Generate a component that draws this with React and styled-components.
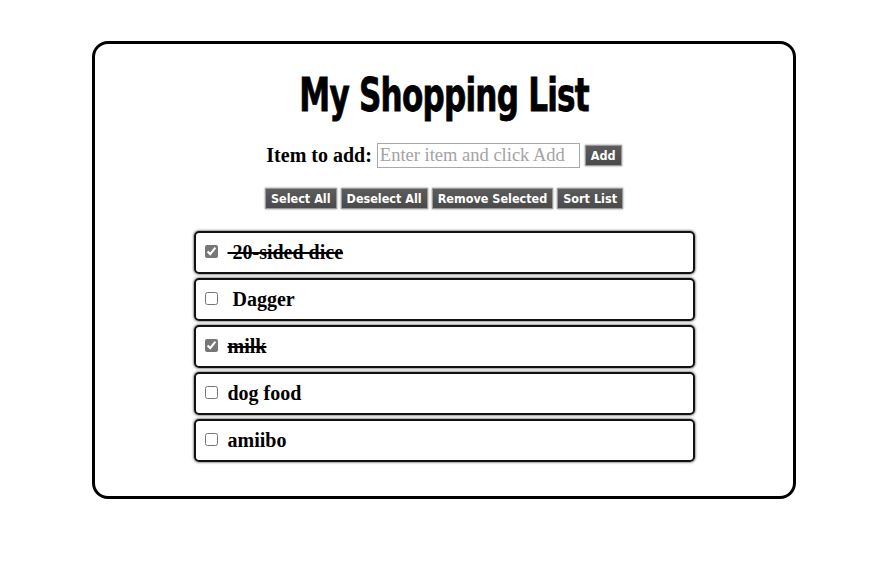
import React from "react";
import styled, { createGlobalStyle } from "styled-components";

const GlobalStyle = createGlobalStyle`
  body {
    margin: 0;
    background: #fff;
    font-family: "Liberation Serif", serif;
  }
`;

const Page = styled.div`
  padding: 41px 0 0 92px;
`;

const Card = styled.div`
  width: 698px;
  height: 452px;
  border: 3px solid #000;
  border-radius: 16px;
  display: flex;
  flex-direction: column;
  align-items: center;
`;

const Title = styled.h1`
  margin: 24px 0 0;
  font-family: Impact, "DejaVu Sans", sans-serif;
  font-stretch: condensed;
  font-weight: bold;
  font-size: 46px;
  line-height: 54px;
  letter-spacing: -1px;
  color: #000;
  -webkit-text-stroke: 0.8px #000;
  transform: scaleX(0.75);
`;

const AddRow = styled.div`
  display: flex;
  align-items: center;
  margin-top: 20px;
  height: 26px;
`;

const Label = styled.label`
  font-family: "Liberation Serif", serif;
  font-weight: bold;
  font-size: 20px;
  margin-right: 5px;
`;

const Input = styled.input`
  width: 203px;
  height: 25px;
  box-sizing: border-box;
  border: 1px solid #a9a9a9;
  font-family: "Liberation Serif", serif;
  font-size: 18.5px;
  padding: 0 2px;
  &::placeholder {
    color: #a3a3a3;
  }
`;

const Button = styled.button`
  background: linear-gradient(#5c5c5c, #4a4a4a);
  color: #fff;
  border: 1px solid #9a9a9a;
  box-shadow: 0 0 2px #888;
  font-family: "DejaVu Sans Condensed", "DejaVu Sans", sans-serif;
  font-weight: bold;
  font-size: 12.5px;
  height: 21px;
  padding: 0 5px;
  margin-left: ${(p) => p.$gap || 0}px;
  cursor: pointer;
`;

const ButtonRow = styled.div`
  display: flex;
  margin-top: 20px;
  gap: 4px;
`;

const List = styled.ul`
  list-style: none;
  margin: 22px 0 0;
  padding: 0;
  display: flex;
  flex-direction: column;
  gap: 4px;
`;

const Item = styled.li`
  width: 501px;
  height: 43px;
  box-sizing: border-box;
  border: 2px solid #111;
  border-radius: 5px;
  box-shadow: 0 0 2px 1px #999;
  display: flex;
  align-items: center;
  padding-left: 9px;
`;

const Check = styled.input`
  width: 13px;
  height: 13px;
  margin: 0 10px 2px 0;
  accent-color: #777;
`;

const ItemText = styled.span`
  font-family: "Liberation Serif", serif;
  font-weight: bold;
  font-size: 20px;
  white-space: pre;
  text-decoration: ${(p) => (p.$done ? "line-through" : "none")};
`;

const items = [
  { text: " 20-sided dice", done: true },
  { text: " Dagger", done: false },
  { text: "milk", done: true },
  { text: "dog food", done: false },
  { text: "amiibo", done: false },
];

export default function App() {
  return (
    <>
      <GlobalStyle />
      <Page>
        <Card>
          <Title>My Shopping List</Title>
          <AddRow>
            <Label>Item to add:</Label>
            <Input placeholder="Enter item and click Add" />
            <Button $gap={5}>Add</Button>
          </AddRow>
          <ButtonRow>
            <Button>Select All</Button>
            <Button>Deselect All</Button>
            <Button>Remove Selected</Button>
            <Button>Sort List</Button>
          </ButtonRow>
          <List>
            {items.map((item) => (
              <Item key={item.text}>
                <Check type="checkbox" defaultChecked={item.done} />
                <ItemText $done={item.done}>{item.text}</ItemText>
              </Item>
            ))}
          </List>
        </Card>
      </Page>
    </>
  );
}
